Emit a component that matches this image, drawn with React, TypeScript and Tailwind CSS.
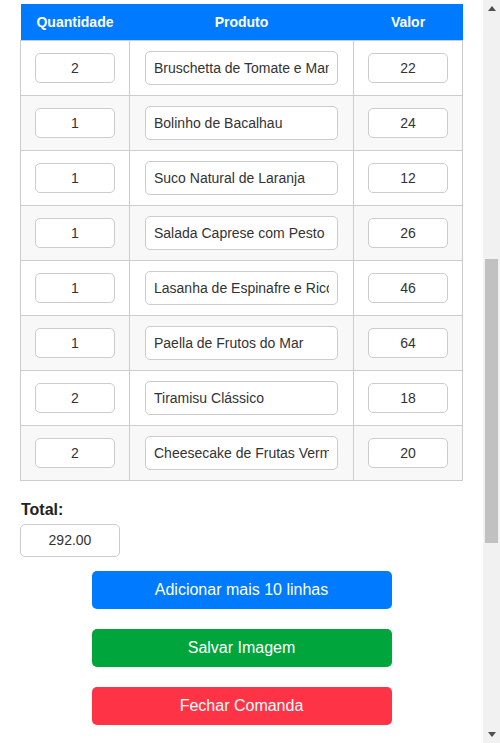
const rows = [
  { qty: "2", name: "Bruschetta de Tomate e Manjericão", price: "22" },
  { qty: "1", name: "Bolinho de Bacalhau", price: "24" },
  { qty: "1", name: "Suco Natural de Laranja", price: "12" },
  { qty: "1", name: "Salada Caprese com Pesto", price: "26" },
  { qty: "1", name: "Lasanha de Espinafre e Ricota", price: "46" },
  { qty: "1", name: "Paella de Frutos do Mar", price: "64" },
  { qty: "2", name: "Tiramisu Clássico", price: "18" },
  { qty: "2", name: "Cheesecake de Frutas Vermelhas", price: "20" },
];

function Scrollbar() {
  return (
    <div className="flex flex-col w-[17px] shrink-0 bg-[#f1f1f1]">
      <div className="h-[17px] flex items-center justify-center">
        <svg width="8" height="5" viewBox="0 0 8 5">
          <path d="M0 5 L4 0 L8 5 Z" fill="#505050" />
        </svg>
      </div>
      <div className="h-[242px]" />
      <div className="h-[284px] mx-[2px] bg-[#c1c1c1]" />
      <div className="flex-1" />
      <div className="h-[17px] flex items-center justify-center">
        <svg width="8" height="5" viewBox="0 0 8 5">
          <path d="M0 0 L8 0 L4 5 Z" fill="#505050" />
        </svg>
      </div>
    </div>
  );
}

export default function App() {
  return (
    <div className="flex h-[743px] overflow-hidden bg-white font-['Liberation_Sans',Arial,sans-serif] text-[#333]">
      <main className="flex-1 px-5 pt-1">
        {/* Order table */}
        <table className="w-full border-collapse text-sm">
          <thead>
            <tr className="h-9 bg-[#007bff] text-white">
              <th className="w-[109px] font-bold">Quantidade</th>
              <th className="font-bold">Produto</th>
              <th className="w-[109px] font-bold">Valor</th>
            </tr>
          </thead>
          <tbody>
            {rows.map((r, i) => (
              <tr key={r.name} className={`h-[55px] ${i % 2 === 1 ? "bg-[#f8f8f8]" : "bg-white"}`}>
                <td className="border border-[#cccccc] text-center align-middle">
                  <input
                    readOnly
                    value={r.qty}
                    className="w-20 h-[30px] rounded-[5px] border border-[#cccccc] bg-white text-center text-sm outline-none"
                  />
                </td>
                <td className="border border-[#cccccc] pl-[15px] pr-[15px] align-middle">
                  <input
                    readOnly
                    value={r.name}
                    className="w-full h-[34px] rounded-[5px] border border-[#cccccc] bg-white px-2 text-sm outline-none"
                  />
                </td>
                <td className="border border-[#cccccc] text-center align-middle">
                  <input
                    readOnly
                    value={r.price}
                    className="w-20 h-[30px] rounded-[5px] border border-[#cccccc] bg-white text-center text-sm outline-none"
                  />
                </td>
              </tr>
            ))}
          </tbody>
        </table>

        {/* Total */}
        <div className="mt-5 flex flex-col gap-[5px] items-start">
          <label className="pl-px text-base leading-[18px] font-bold text-[#222]">Total:</label>
          <input
            readOnly
            value="292.00"
            className="w-[100px] h-[33px] rounded-[5px] border border-[#cccccc] text-center text-sm outline-none"
          />
        </div>

        {/* Actions */}
        <div className="mt-[14px] flex flex-col gap-5 items-center">
          <button className="w-[300px] h-[38px] rounded-[5px] bg-[#007bff] text-white text-base">
            Adicionar mais 10 linhas
          </button>
          <button className="w-[300px] h-[38px] rounded-[5px] bg-[#00a63c] text-white text-base">
            Salvar Imagem
          </button>
          <button className="w-[300px] h-[38px] rounded-[5px] bg-[#ff3346] text-white text-base">
            Fechar Comanda
          </button>
        </div>
      </main>
      <Scrollbar />
    </div>
  );
}
